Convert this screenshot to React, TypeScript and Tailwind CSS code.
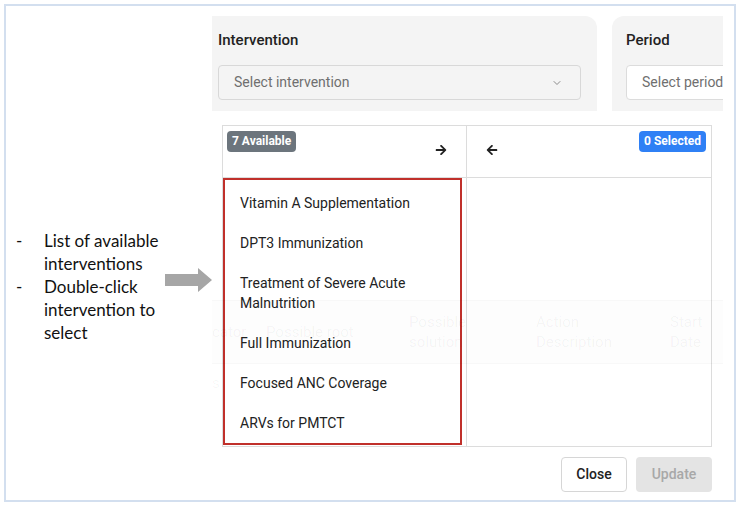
import React from 'react';
import { ChevronDown } from 'lucide-react';
import { FaArrowRight, FaArrowLeft } from 'react-icons/fa';

const interventions = [
  'Vitamin A Supplementation',
  'DPT3 Immunization',
  'Treatment of Severe Acute Malnutrition',
  'Full Immunization',
  'Focused ANC Coverage',
  'ARVs for PMTCT',
];

const notes = [
  ['List of available', 'interventions'],
  ['Double-click', 'intervention to', 'select'],
];

function BlockArrow() {
  return (
    <svg width="48" height="24" viewBox="0 0 48 24" className="shrink-0">
      <polygon points="0,6 33,6 33,0 47,12 33,24 33,18 0,18" fill="#a6a6a6" />
    </svg>
  );
}

// faint table of the page behind the modal
function GhostRow() {
  return (
    <div className="pointer-events-none absolute left-0 top-[294px] h-[64px] w-full border-y border-black/[0.02] bg-black/[0.008] font-['Roboto',sans-serif] text-[15px] leading-[20px] text-black/[0.045]">
      <div className="flex h-full items-center">
        <div className="w-[54px]">cator</div>
        <div className="w-[143px]">Possible root</div>
        <div className="w-[127px]">Possible<br />solution</div>
        <div className="w-[134px]">Action<br />Description</div>
        <div>Start<br />Date</div>
      </div>
      <div className="mt-[10px] text-black/[0.04]">s</div>
    </div>
  );
}

export default function App() {
  return (
    <div className="h-[506px] w-[740px] overflow-hidden bg-white p-[4px]">
      <div className="flex h-[498px] border-2 border-[#d3dfef]">
        {/* annotation */}
        <div className="flex w-[206px] shrink-0 items-start pl-[10px] pt-[223px] font-['Lato',sans-serif] text-[17px] leading-[23px] text-[#111]">
          <div className="w-[149px] shrink-0">
            {notes.map((lines, i) => (
              <div key={i} className="flex">
                <span className="w-[28px] shrink-0">-</span>
                <div>
                  {lines.map((l) => (
                    <div key={l}>{l}</div>
                  ))}
                </div>
              </div>
            ))}
          </div>
          <div className="mt-[39px]">
            <BlockArrow />
          </div>
        </div>

        {/* screenshot of the modal */}
        <div className="relative w-[511px] shrink-0 overflow-hidden pt-[10px] pr-[11px] font-['Roboto',sans-serif]">
          <div className="flex h-[95px] w-[520px]">
            <div className="w-[385px] shrink-0 rounded-tr-[12px] bg-[#f4f4f4] pl-[6px] pt-[14px]">
              <div className="text-[15px] font-medium leading-[20px] text-[#222]">Intervention</div>
              <div className="mt-[15px] flex h-[35px] w-[363px] items-center justify-between rounded-[4px] border border-[#d8d8d8] bg-[#f4f4f4] pl-[15px] pr-[17px] text-[14px] text-[#6f6f6f]">
                <span>Select intervention</span>
                <ChevronDown size={12} strokeWidth={2} className="text-[#8a8a8a]" />
              </div>
            </div>
            <div className="ml-[15px] flex-1 rounded-tl-[12px] bg-[#f4f4f4] pl-[14px] pt-[14px]">
              <div className="text-[15px] font-medium leading-[20px] text-[#222]">Period</div>
              <div className="mt-[15px] flex h-[35px] w-[200px] items-center rounded-[4px] border border-[#dcdcdc] bg-white pl-[15px] text-[14px] text-[#6f6f6f]">
                Select period
              </div>
            </div>
          </div>

          <div className="ml-[10px] mt-[14px] grid h-[322px] w-[490px] grid-cols-[244px_1fr] grid-rows-[52px_1fr] border border-[#dcdcdc]">
            <div className="flex items-start justify-between border-b border-r border-[#dcdcdc] pl-[4px] pr-[19px] pt-[5px]">
              <span className="rounded-[4px] bg-[#6c757d] px-[5px] text-[12px] font-bold leading-[21px] text-white">7 Available</span>
              <FaArrowRight size={12} className="mt-[13px] text-[#222]" />
            </div>
            <div className="flex items-start justify-between border-b border-[#dcdcdc] pl-[19px] pr-[5px] pt-[5px]">
              <FaArrowLeft size={12} className="mt-[13px] text-[#222]" />
              <span className="rounded-[4px] bg-[#2f80f5] px-[5px] text-[12px] font-bold leading-[21px] text-white">0 Selected</span>
            </div>
            <div className="border-r border-[#dcdcdc]">
              <div className="h-[267px] w-[239px] border-2 border-[#c0302b] pt-[3px]">
                {interventions.map((name) => (
                  <div key={name} className="pl-[15px] pr-[30px] py-[10px] text-[14px] leading-[20px] text-[#222]">
                    {name}
                  </div>
                ))}
              </div>
            </div>
            <div />
          </div>

          <div className="mt-[10px] flex w-[500px] justify-end gap-[9px]">
            <button className="h-[35px] w-[66px] rounded-[4px] border border-[#d6d6d6] bg-white text-[14px] font-medium text-[#222]">Close</button>
            <button className="h-[35px] w-[76px] rounded-[4px] bg-[#e4e4e4] text-[14px] font-medium text-[#a8a8a8]">Update</button>
          </div>

          <GhostRow />
        </div>
      </div>
    </div>
  );
}
